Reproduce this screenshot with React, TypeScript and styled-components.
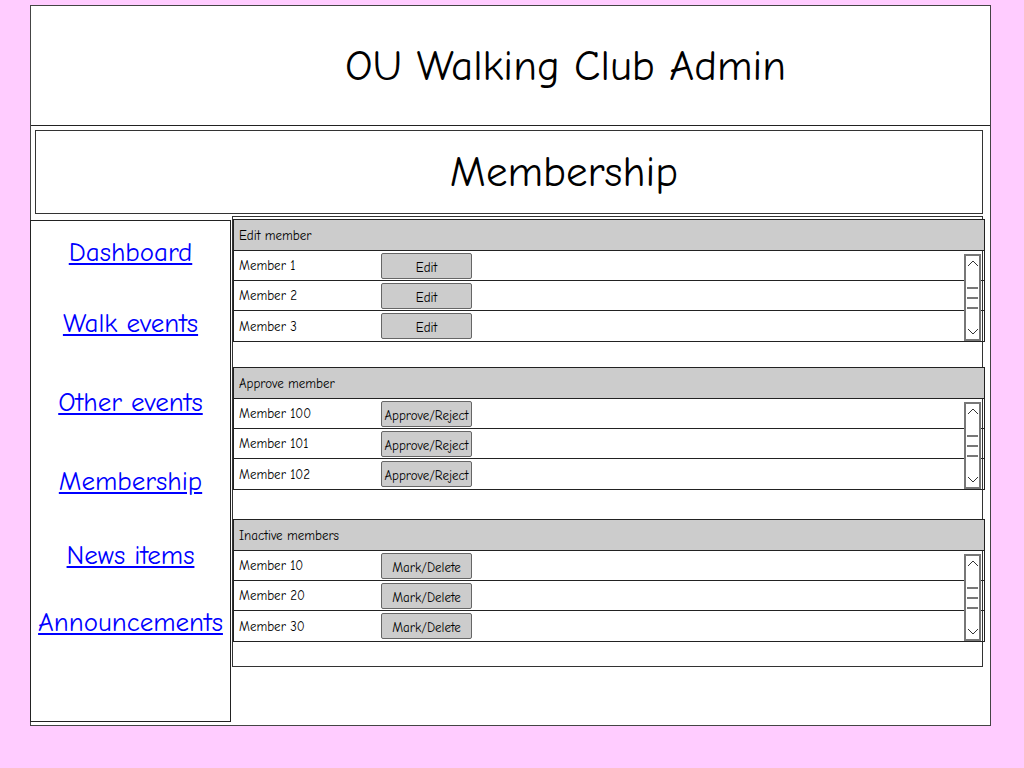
import React from 'react';
import styled, { createGlobalStyle } from 'styled-components';

const font = `"Comic Sans MS", "Comic Neue", "Noto Sans", sans-serif`;

const GlobalStyle = createGlobalStyle`
  html, body {
    margin: 0;
    padding: 0;
    background: #ffccff;
    font-family: ${font};
  }
`;

const Frame = styled.div`
  box-sizing: border-box;
  margin: 5px 0 0 30px;
  width: 961px;
  height: 721px;
  background: #fff;
  border: 1px solid #444;
  display: flex;
  flex-direction: column;
`;

const Header = styled.header`
  box-sizing: border-box;
  height: 120px;
  border-bottom: 1px solid #222;
  display: flex;
  align-items: center;
  justify-content: center;
  padding: 0 0 0 110px;
`;

const Title = styled.h1`
  margin: 0;
  font-weight: 400;
  font-size: 43px;
  color: #000;
`;

const SubHeader = styled.div`
  box-sizing: border-box;
  height: 84px;
  margin: 4px 7px 0 4px;
  border: 1px solid #333;
  display: flex;
  align-items: center;
  justify-content: center;
  padding-left: 110px;
`;

const SubTitle = styled.h2`
  margin: 0;
  font-weight: 400;
  font-size: 43px;
  color: #000;
`;

const Body = styled.div`
  display: flex;
  align-items: flex-start;
  margin-top: 2px;
`;

const Sidebar = styled.nav`
  box-sizing: border-box;
  width: 201px;
  height: 502px;
  margin-top: 4px;
  margin-left: -1px;
  border: 1px solid #222;
  display: flex;
  flex-direction: column;
  align-items: center;
`;

const NavLink = styled.a<{ $gap: number }>`
  margin-top: ${({ $gap }) => $gap}px;
  font-size: 27px;
  line-height: 30px;
  color: #0000ff;
  text-decoration: underline;
  white-space: nowrap;
`;

const Content = styled.div`
  box-sizing: border-box;
  width: 751px;
  height: 451px;
  margin-left: 1px;
  border: 1px solid #333;
  padding: 2px 0 0 0;
  display: flex;
  flex-direction: column;
`;

const Panel = styled.section<{ $space: number }>`
  position: relative;
  width: 752px;
  box-sizing: border-box;
  margin-top: ${({ $space }) => $space}px;
  border: 1px solid #222;
`;

const PanelHead = styled.div`
  box-sizing: border-box;
  height: 31px;
  background: #cccccc;
  border-bottom: 1px solid #222;
  padding: 0 5px;
  display: flex;
  align-items: center;
  font-size: 13px;
  color: #000;
`;

const Row = styled.div<{ $last?: boolean }>`
  box-sizing: border-box;
  height: 30px;
  display: flex;
  align-items: center;
  border-bottom: ${({ $last }) => ($last ? 'none' : '1px solid #222')};
  padding-left: 5px;
  font-size: 13px;
  color: #000;
`;

const Name = styled.span`
  width: 142px;
`;

const Btn = styled.button`
  box-sizing: border-box;
  width: 91px;
  height: 26px;
  background: #cccccc;
  border: 1px solid #666;
  border-radius: 2px;
  font-family: ${font};
  font-size: 13px;
  color: #000;
  padding: 3px 0 0;
  white-space: nowrap;
  overflow: hidden;
`;

const Scroll = styled.div`
  position: absolute;
  right: 3px;
  top: 34px;
  bottom: 0;
  width: 17px;
  box-sizing: border-box;
  border: 2px solid #777;
  background: #fff;
  display: flex;
  flex-direction: column;
  align-items: center;
  justify-content: space-between;
`;

const Grip = styled.div`
  display: flex;
  flex-direction: column;
  gap: 8px;
  & > span {
    display: block;
    width: 11px;
    height: 2px;
    background: #777;
  }
`;

const Arrow = ({ up }: { up?: boolean }) => (
  <svg width="12" height="8" viewBox="0 0 12 8" style={{ marginTop: up ? 3 : 0, marginBottom: up ? 0 : 3 }}>
    <path d={up ? 'M1 7 L6 2 L11 7' : 'M1 1 L6 6 L11 1'} fill="none" stroke="#333" strokeWidth="1" />
  </svg>
);

const ScrollBar = () => (
  <Scroll>
    <Arrow up />
    <Grip>
      <span />
      <span />
      <span />
    </Grip>
    <Arrow />
  </Scroll>
);

type PanelProps = { title: string; members: string[]; action: string; space: number };

const MemberPanel = ({ title, members, action, space }: PanelProps) => (
  <Panel $space={space}>
    <PanelHead>{title}</PanelHead>
    {members.map((m, i) => (
      <Row key={m} $last={i === members.length - 1}>
        <Name>{m}</Name>
        <Btn>{action}</Btn>
      </Row>
    ))}
    <ScrollBar />
  </Panel>
);

const links = [
  { label: 'Dashboard', gap: 17 },
  { label: 'Walk events', gap: 41 },
  { label: 'Other events', gap: 49 },
  { label: 'Membership', gap: 49 },
  { label: 'News items', gap: 44 },
  { label: 'Announcements', gap: 37 },
];

export default function App() {
  return (
    <>
      <GlobalStyle />
      <Frame>
        <Header>
          <Title>OU Walking Club Admin</Title>
        </Header>
        <SubHeader>
          <SubTitle>Membership</SubTitle>
        </SubHeader>
        <Body>
          <Sidebar>
            {links.map((l) => (
              <NavLink key={l.label} href="#" $gap={l.gap}>
                {l.label}
              </NavLink>
            ))}
          </Sidebar>
          <Content>
            <MemberPanel
              space={0}
              title="Edit member"
              members={['Member 1', 'Member 2', 'Member 3']}
              action="Edit"
            />
            <MemberPanel
              space={25}
              title="Approve member"
              members={['Member 100', 'Member 101', 'Member 102']}
              action="Approve/Reject"
            />
            <MemberPanel
              space={29}
              title="Inactive members"
              members={['Member 10', 'Member 20', 'Member 30']}
              action="Mark/Delete"
            />
          </Content>
        </Body>
      </Frame>
    </>
  );
}
